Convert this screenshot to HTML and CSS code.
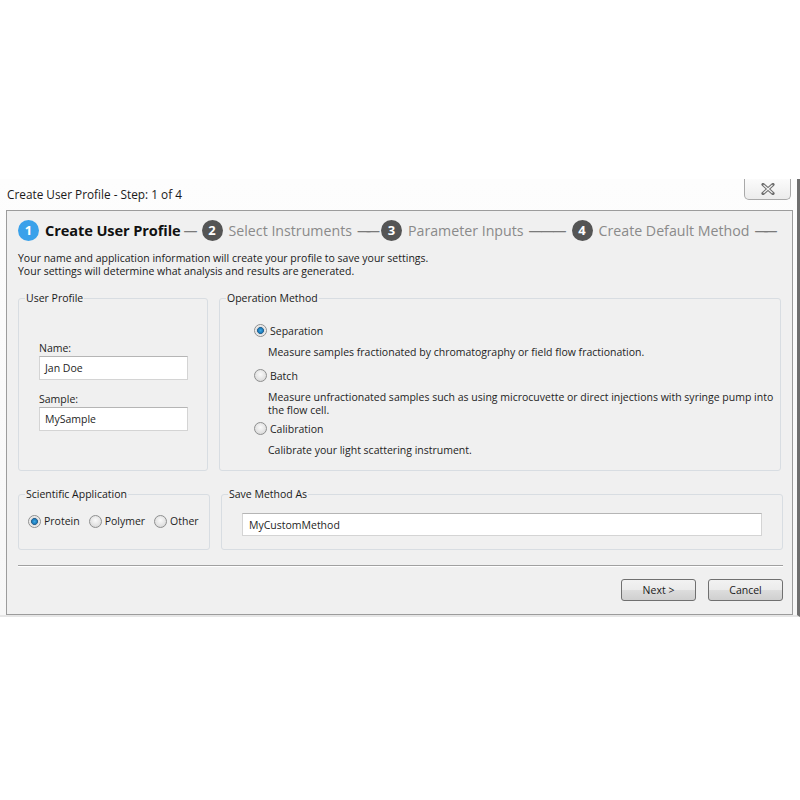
FILE: index.html
```html
<!DOCTYPE html>
<html>
<head>
<meta charset="utf-8">
<link rel="stylesheet" href="styles.css">
</head>
<body>
<div class="page">
  <div class="window">
    <div class="titlebar">
      <span class="title">Create User Profile - Step: 1 of 4</span>
      <button class="close" aria-label="Close">
        <svg width="16" height="12" viewBox="0 0 16 12"><path d="M3 1.5 L13 10.5 M13 1.5 L3 10.5" stroke="#6d6d6d" stroke-width="3.2" fill="none" stroke-linecap="round"/><path d="M3.5 2 L12.5 10 M12.5 2 L3.5 10" stroke="#f4f4f4" stroke-width="1.1" fill="none"/></svg>
      </button>
    </div>
    <div class="frame">
      <div class="steps">
        <span class="num active">1</span><span class="step active">Create User Profile</span><span class="dash d1">—</span>
        <span class="num">2</span><span class="step">Select Instruments</span><span class="dash d2">——</span>
        <span class="num">3</span><span class="step">Parameter Inputs</span><span class="dash d3">———</span>
        <span class="num">4</span><span class="step">Create Default Method</span><span class="dash d4">——</span>
      </div>
      <p class="intro">Your name and application information will create your profile to save your settings.<br>Your settings will determine what analysis and results are generated.</p>

      <div class="row row1">
        <fieldset class="group g-user">
          <legend>User Profile</legend>
          <div class="gbody">
            <label class="lbl">Name:</label>
            <div class="input">Jan Doe</div>
            <label class="lbl">Sample:</label>
            <div class="input">MySample</div>
          </div>
        </fieldset>
        <fieldset class="group g-op">
          <legend>Operation Method</legend>
          <div class="gbody">
            <div class="opt"><span class="radio checked"></span>Separation</div>
            <div class="desc d-first">Measure samples fractionated by chromatography or field flow fractionation.</div>
            <div class="opt"><span class="radio"></span>Batch</div>
            <div class="desc d-two">Measure unfractionated samples such as using microcuvette or direct injections with syringe pump into the flow cell.</div>
            <div class="opt"><span class="radio"></span>Calibration</div>
            <div class="desc">Calibrate your light scattering instrument.</div>
          </div>
        </fieldset>
      </div>

      <div class="row row2">
        <fieldset class="group g-sci">
          <legend>Scientific Application</legend>
          <div class="gbody">
            <div class="inline">
              <span class="iopt"><span class="radio checked"></span>Protein</span>
              <span class="iopt"><span class="radio"></span>Polymer</span>
              <span class="iopt"><span class="radio"></span>Other</span>
            </div>
          </div>
        </fieldset>
        <fieldset class="group g-save">
          <legend>Save Method As</legend>
          <div class="gbody">
            <div class="input wide">MyCustomMethod</div>
          </div>
        </fieldset>
      </div>

      <div class="sep"></div>
      <div class="buttons">
        <button class="btn">Next &gt;</button>
        <button class="btn">Cancel</button>
      </div>
    </div>
  </div>
</div>
</body>
</html>
```

FILE: styles.css
```css
* { box-sizing: border-box; }
html, body { margin: 0; padding: 0; background: #ffffff; }
body { font-family: "Open Sans", "Noto Sans", sans-serif; color: #1e1e1e; }

.page { padding-top: 179px; width: 800px; height: 800px; }

.window {
  width: 800px;
  border-right: 3px solid #6f6f6f;
  border-bottom: 2px solid #e6e6e6;
  background: linear-gradient(to bottom, #fdfdfd, #f7f7f7);
}

.titlebar {
  height: 31px;
  display: flex;
  justify-content: space-between;
  align-items: flex-start;
  padding-left: 7px;
  padding-right: 6px;
}
.title { font-size: 11.8px; line-height: 14px; margin-top: 8px; color: #1a1a1a; }
.close {
  width: 47px; height: 21px;
  border: 1px solid #a9a9a9;
  border-top: none;
  border-radius: 0 0 5px 5px;
  background: linear-gradient(to bottom, #fbfbfb, #ececec);
  display: flex; align-items: center; justify-content: center;
  padding: 0;
}

.frame {
  margin-left: 6px;
  width: 787px;
  height: 405px;
  border: 1px solid #9c9c9c;
  background: #f0f0f0;
  padding: 8px 8px 0 11px;
}

.steps {
  display: flex;
  align-items: center;
  height: 22px;
  white-space: nowrap;
}
.num {
  flex: none;
  width: 21px; height: 21px; border-radius: 50%;
  background: #555555; color: #fff;
  font-weight: 700; font-size: 13px;
  display: inline-flex; align-items: center; justify-content: center;
  margin-right: 6px;
}
.num.active { background: #3aa1ea; }
.step { font-size: 14.2px; color: #8a8a8a; }
.step.active { font-size: 14.6px; color: #111; font-weight: 700; letter-spacing: -0.1px; }
.dash { font-size: 14px; color: #7a7a7a; margin: 0 5px; }
.d1 { letter-spacing: 0; margin: 0 4px 0 3px; }
.d2 { letter-spacing: -5px; margin-right: 6px; }
.d3 { letter-spacing: -2px; margin-right: 7px; }
.d4 { letter-spacing: -5px; }

.intro { margin: 11px 0 0 0; font-size: 10.5px; line-height: 13px; color: #1a1a1a; }

.row { display: flex; gap: 11px; }
.row1 { margin-top: 13px; height: 180px; }
.row2 { margin-top: 16px; height: 63px; }

.group {
  margin: 0;
  border: 1px solid #d8dde2;
  border-radius: 3px;
  padding: 0;
  min-width: 0;
  font-size: 10.5px;
}
.group legend {
  font-size: 10.5px;
  padding: 0 1px;
  margin-left: 6px;
  line-height: 14px;
  color: #1a1a1a;
}

.g-user { width: 190px; }
.g-user .gbody { padding: 36px 0 0 20px; }
.g-op { width: 562px; }
.g-op .gbody { padding: 18px 0 0 34px; }

.lbl { display: block; font-size: 10.5px; line-height: 14px; margin-bottom: 1px; }
.lbl + .input { margin-bottom: 12px; }
.input {
  width: 149px; height: 24px;
  background: #fff;
  border: 1px solid #d4d4d4;
  border-top-color: #b5b5b5;
  font-size: 10.5px;
  padding: 4px 5px;
  line-height: 14px;
}

.opt { display: flex; align-items: center; font-size: 10.5px; height: 15px; }
.desc { font-size: 10.5px; line-height: 13px; margin: 8px 0 8px 14px; width: 510px; }
.desc.d-first { margin-bottom: 9px; }
.desc.d-two { margin-bottom: 4px; }

.radio {
  width: 13px; height: 13px; border-radius: 50%;
  border: 1px solid #8e8f8f;
  background: radial-gradient(circle at 50% 40%, #fafafa 0%, #e2e2e2 60%, #cfcfcf 100%);
  display: inline-block;
  margin-right: 3px;
  flex: none;
}
.radio.checked {
  background: radial-gradient(circle, #3fa9e4 0%, #1a78b8 33%, #2a5f89 40%, #dcdcdc 48%, #f2f2f2 70%, #d8d8d8 100%);
}

.g-sci { width: 192px; }
.g-sci .gbody { padding: 13px 0 0 9px; }
.inline { display: flex; gap: 9px; font-size: 10.5px; }
.iopt { display: flex; align-items: center; }

.g-save { width: 562px; }
.g-save .gbody { padding: 12px 0 0 20px; }
.input.wide { width: 520px; height: 23px; padding-left: 6px; }

.sep {
  margin-top: 15px;
  height: 2px;
  border-top: 1px solid #a0a0a0;
  border-bottom: 1px solid #ffffff;
  width: 765px;
}

.buttons {
  display: flex; justify-content: flex-end; gap: 12px;
  margin-top: 12px;
  width: 765px;
}
.btn {
  width: 75px; height: 22px;
  border: 1px solid #707070;
  border-radius: 3px;
  background: linear-gradient(to bottom, #f2f2f2 0%, #ebebeb 50%, #dddddd 51%, #cfcfcf 100%);
  font-family: "Open Sans", "Noto Sans", sans-serif;
  font-size: 10.5px;
  color: #1a1a1a;
  padding: 0;
}
```
